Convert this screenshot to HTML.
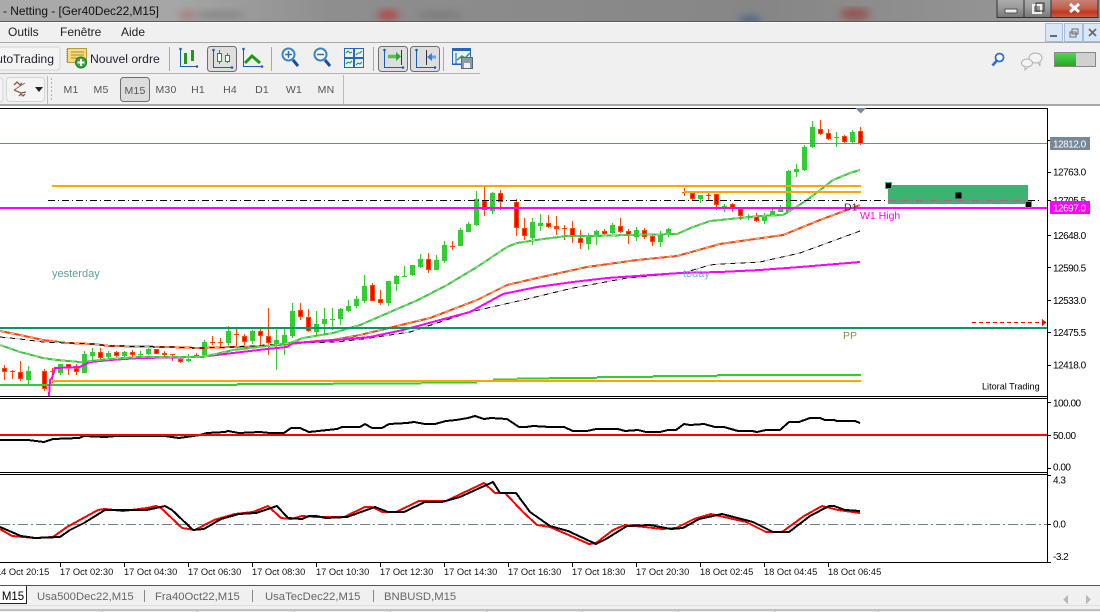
<!DOCTYPE html>
<html><head><meta charset="utf-8"><title>Netting - Ger40Dec22,M15</title>
<style>
html,body{margin:0;padding:0;background:#fff;overflow:hidden}
svg{display:block}
text{font-family:"Liberation Sans",sans-serif}
.a{font-size:10px;letter-spacing:-.5px;fill:#000}
.t{font-size:9.3px;fill:#111}
.m{font-size:12px;fill:#222}
.p{font-size:10.5px;fill:#555;text-anchor:middle;letter-spacing:.2px}
.b{font-size:11.3px;fill:#666}
.c{shape-rendering:crispEdges}
</style></head><body>
<svg width="1100" height="612" viewBox="0 0 1100 612" xmlns="http://www.w3.org/2000/svg">
<defs>
<linearGradient id="tb" x1="0" y1="0" x2="1" y2="0"><stop offset="0" stop-color="#aaa"/><stop offset=".16" stop-color="#a6a6a6"/><stop offset=".3" stop-color="#8e8e8e"/><stop offset=".7" stop-color="#868686"/><stop offset="1" stop-color="#9a9a9a"/></linearGradient>
<linearGradient id="cl" x1="0" y1="0" x2="0" y2="1"><stop offset="0" stop-color="#c98a80"/><stop offset=".55" stop-color="#c0604a"/><stop offset=".7" stop-color="#c8321c"/><stop offset="1" stop-color="#c4604e"/></linearGradient>
<linearGradient id="gb" x1="0" y1="0" x2="0" y2="1"><stop offset="0" stop-color="#b0b0b0"/><stop offset=".5" stop-color="#9a9a9a"/><stop offset="1" stop-color="#777"/></linearGradient>
<linearGradient id="gg" x1="0" y1="0" x2="0" y2="1"><stop offset="0" stop-color="#4fd84f"/><stop offset="1" stop-color="#25a525"/></linearGradient>
<filter id="bl"><feGaussianBlur stdDeviation="4"/></filter>
</defs>

<!-- title bar -->
<rect width="1100" height="22" fill="url(#tb)"/>
<g filter="url(#bl)">
<ellipse cx="187" cy="15" rx="8" ry="5" fill="#a87070" opacity=".7"/>
<ellipse cx="220" cy="15" rx="26" ry="3" fill="#7e7e7e"/>
<ellipse cx="388" cy="15" rx="11" ry="5" fill="#b83a3a" opacity=".85"/>
<ellipse cx="440" cy="15" rx="24" ry="3" fill="#777"/>
<ellipse cx="750" cy="20" rx="11" ry="4" fill="#3c5c8c" opacity=".85"/>
<ellipse cx="855" cy="14" rx="15" ry="6" fill="#9a4848" opacity=".85"/>
</g>
<text x="3" y="15" style="font-size:11.9px;fill:#111">- Netting - [Ger40Dec22,M15]</text>
<rect y="21" width="1100" height="1" fill="#5a5a5a"/>

<!-- window buttons -->
<g class="c">
<rect x="997" y="-2" width="27" height="19.5" fill="url(#gb)" stroke="#333"/>
<rect x="1024" y="-2" width="27" height="19.5" fill="url(#gb)" stroke="#333"/>
<rect x="1051" y="-2" width="47" height="19.5" fill="url(#cl)" stroke="#333"/>
<rect x="1005" y="9" width="12" height="4" fill="#eee" stroke="#555"/>
<rect x="1033" y="5" width="8" height="8" fill="none" stroke="#eee" stroke-width="2"/>
<rect x="1036" y="3" width="8" height="8" fill="none" stroke="#333"/>
</g>
<path d="M1070 4l9 8M1079 4l-9 8" stroke="#fff" stroke-width="3" fill="none"/>

<!-- menu bar -->
<rect y="22" width="1100" height="20" fill="#f0f0f0"/>
<rect y="22" width="1100" height="1" fill="#fbfbfb"/>
<text class="m" x="8" y="36">Outils</text>
<text class="m" x="60" y="36">Fenêtre</text>
<text class="m" x="121" y="36">Aide</text>
<g class="c">
<rect x="1045.500" y="23.500" width="17" height="18" fill="#d8e6f6" stroke="#a6bcd8"/>
<rect x="1064.500" y="23.500" width="18" height="18" fill="#d8e6f6" stroke="#a6bcd8"/>
<rect x="1083.500" y="23.500" width="18" height="18" fill="#d8e6f6" stroke="#a6bcd8"/>
<rect x="1050" y="35" width="7" height="2" fill="#6a6a6a"/>
<rect x="1070" y="32" width="6" height="5" fill="none" stroke="#6a6a6a"/>
<rect x="1072" y="29" width="6" height="5" fill="none" stroke="#6a6a6a"/>
</g>
<path d="M1089 29l7 7M1096 29l-7 7" stroke="#6a6a6a" stroke-width="1.800"/>
<rect y="42" width="1100" height="1" fill="#a8a8a8"/>

<!-- toolbars -->
<rect y="43" width="1100" height="62" fill="#f0f0f0"/>
<rect y="73" width="480" height="1" fill="#b4b4b4"/>
<rect y="104" width="1100" height="2" fill="#a8a8a8"/>
<rect y="106" width="1100" height="1.500" fill="#fff"/>
<rect x="-6" y="47" width="66" height="23" rx="3" fill="#f4f4f4" stroke="#d4d4d4"/>
<text x="54" y="63" text-anchor="end" style="font-size:12.2px;fill:#223">utoTrading</text>
<!-- new order icon -->
<rect x="67.500" y="48.500" width="19" height="14" fill="#f6dc7c" stroke="#b89a36"/>
<path d="M71 52h13M71 55h13M71 58h10" stroke="#a88a30" stroke-width="1"/>
<path d="M67 49v14" stroke="#8a7a40" stroke-dasharray="1 1"/>
<circle cx="81" cy="62.500" r="5.500" fill="#35a93a" stroke="#1e7a22"/>
<path d="M81 59v7M77.500 62.500h7" stroke="#fff" stroke-width="2"/>
<text x="90" y="63" style="font-size:12.2px;fill:#223">Nouvel ordre</text>
<rect x="169" y="47" width="1" height="24" fill="#a8a8a8"/>
<rect x="271" y="47" width="1" height="24" fill="#a8a8a8"/>
<rect x="373" y="47" width="1" height="24" fill="#a8a8a8"/>
<rect x="443" y="47" width="1" height="24" fill="#a8a8a8"/>
<rect x="207.500" y="46.500" width="29" height="25" rx="3" fill="#dedede" stroke="#6e6e6e"/>
<rect x="378.500" y="46.500" width="29" height="25" rx="3" fill="#dedede" stroke="#6e6e6e"/>
<rect x="410.500" y="46.500" width="29" height="25" rx="3" fill="#dedede" stroke="#6e6e6e"/>

<g stroke="#1e5cb4" fill="#1e5cb4" stroke-width="1">
<path d="M180.500 49V66.500H197" fill="none"/><circle cx="180.500" cy="49" r=".8"/><circle cx="197" cy="66.500" r=".8"/>
<path d="M213.500 50V67.500H232" fill="none"/><circle cx="213.500" cy="50" r=".8"/><circle cx="232" cy="67.500" r=".8"/>
<path d="M243.500 49V66.500H262" fill="none"/><circle cx="243.500" cy="49" r=".8"/><circle cx="262" cy="66.500" r=".8"/>
<path d="M384.500 50V67.500H403" fill="none"/><circle cx="384.500" cy="50" r=".8"/><circle cx="403" cy="67.500" r=".8"/>
<path d="M416.500 50V67.500H435" fill="none"/><circle cx="416.500" cy="50" r=".8"/><circle cx="435" cy="67.500" r=".8"/>
<path d="M426.500 50V65M401.500 50V65" fill="none" stroke="#333"/>
</g>
<path d="M185.500 53V64M184 56h3M192.500 50V61" stroke="#1f9a12" stroke-width="3" fill="none"/>
<path d="M219.500 50v14M227.500 53v10" stroke="#1f9a12" fill="none"/>
<rect x="217.500" y="53.500" width="4" height="8" fill="#fff" stroke="#1f9a12"/>
<rect x="225.500" y="55.500" width="4" height="6" fill="#fff" stroke="#1f9a12"/>
<path d="M245 63l7-7 8 7" stroke="#1f9a12" stroke-width="3" fill="none"/>
<circle cx="288.500" cy="54.500" r="6" fill="#f4f9ff" stroke="#3c84cc" stroke-width="2"/>
<path d="M285 54.500h7M288.500 51v7" stroke="#2b6cc0" stroke-width="1.500"/>
<path d="M293 60l5 6" stroke="#1e4f96" stroke-width="3"/>
<circle cx="320.500" cy="54.500" r="6" fill="#f4f9ff" stroke="#3c84cc" stroke-width="2"/>
<path d="M317 54.500h7" stroke="#2b6cc0" stroke-width="1.500"/>
<path d="M325 60l5 6" stroke="#1e4f96" stroke-width="3"/>
<g class="c">
<rect x="344.500" y="48.500" width="19" height="19" fill="#e8f2fb" stroke="#2268c0"/>
<rect x="344" y="57" width="20" height="2" fill="#2268c0"/>
<rect x="353" y="48" width="2" height="20" fill="#2268c0"/>
</g>
<path d="M346 53l2-2 2 2 2-1M356 55l2-2 2 0 2-2M346 64l2-2 2 1 2-2M356 65l2-2 2 1 2-2" stroke="#2e8a2e" fill="none"/>
<path d="M388 56.500h9" stroke="#58c048" stroke-width="3.500"/><path d="M396 52l5 4.500-5 4.500z" fill="#3aa43a"/>
<path d="M436 57h-5" stroke="#6aa0e0" stroke-width="3"/><path d="M432 53l-5 4 5 4z" fill="#3a80d8"/>
<rect x="452.500" y="48.500" width="18" height="16" fill="#e8f2fb" stroke="#2268c0"/>
<rect x="452" y="48" width="19" height="3" fill="#2268c0"/>
<path d="M456 53v11M453 64h8" stroke="#1e5cb4"/>
<path d="M457 60l5-4 3 2 5-5" stroke="#3aa43a" stroke-width="1.500" fill="none"/>
<rect x="461.500" y="57.500" width="11" height="11" fill="#8e9aa6" stroke="#5d6670"/>
<rect x="464" y="63" width="6" height="5" fill="#f0f0f0"/>

<rect x="-6" y="78" width="9" height="24" rx="3" fill="#f4f4f4" stroke="#d4d4d4"/>
<rect x="6.500" y="77.500" width="38" height="24" rx="3" fill="#f4f4f4" stroke="#d4d4d4"/>
<path d="M14 85l3-3 3 3 2-2M14 90l7 3 5-1M19 96l2-2 2 2 2-2" stroke="#8a5a48" stroke-width="1.300" fill="none"/>
<path d="M14 90l11-7" stroke="#8a5a48" stroke-width=".8"/>
<path d="M35 87h8l-4 5z" fill="#222"/>
<path d="M51.500 78V102" stroke="#b0b0b0" stroke-dasharray="2 2"/>
<rect x="47" y="76" width="1" height="28" fill="#bbb"/>
<rect x="343" y="75" width="1" height="29" fill="#bbb"/>
<rect x="120.500" y="77.500" width="29" height="24" rx="3" fill="#dcdcdc" stroke="#6e6e6e"/>
<text class="p" x="71" y="93">M1</text>
<text class="p" x="101" y="93">M5</text>
<text class="p" x="135" y="94">M15</text>
<text class="p" x="166" y="93">M30</text>
<text class="p" x="198" y="93">H1</text>
<text class="p" x="230" y="93">H4</text>
<text class="p" x="262" y="93">D1</text>
<text class="p" x="294" y="93">W1</text>
<text class="p" x="326" y="93">MN</text>

<!-- right toolbar icons -->
<circle cx="999.500" cy="57.500" r="4" fill="#fff" stroke="#2a6ed0" stroke-width="1.800"/>
<path d="M996.500 61l-4 4.500" stroke="#2a6ed0" stroke-width="2.600"/>
<ellipse cx="1035.500" cy="58" rx="6.500" ry="5" fill="#f4f4f4" stroke="#b0b0b0"/>
<path d="M1038 62l2 4v-5" fill="#f4f4f4" stroke="#b0b0b0"/>
<ellipse cx="1027" cy="63" rx="5.500" ry="4" fill="#f4f4f4" stroke="#b0b0b0"/>
<path d="M1025 67l0 3 3-3" fill="#f4f4f4" stroke="#b0b0b0"/>
<g class="c">
<rect x="1054.500" y="52.500" width="41" height="14" fill="#d0d0d0" stroke="#888"/>
<rect x="1055" y="53" width="21" height="13" fill="url(#gg)"/>
</g>

<!-- chart frame -->
<rect y="107.500" width="1100" height="478" fill="#fff"/>
<g class="c" fill="none">
<path d="M0 108.500H1047.500V562.500H0" stroke="#000"/>
<path d="M0 396.500H1047.500M0 398.500H1047.500M0 472.500H1047.500M0 474.500H1047.500" stroke="#000"/>

<!-- candles -->
<path stroke="#32cd32" d="M28.500 366V384M60.500 364V375M84.500 351V373M92.500 348V360M108.500 351V359M124.500 351V357M140.500 351V357M148.500 348V355M188.500 354V362M204.500 340V356M228.500 326V346M252.500 330V344M276.500 329V370M284.500 328V355M292.500 303V338M316.500 311V335M324.500 308V335M332.500 308V330M340.500 308V325M348.500 300V312M356.500 296V308M364.500 275V303M388.500 281V306M396.500 275V291M404.500 266V277M412.500 265V276M420.500 254V268M436.500 255V270M444.500 241V263M460.500 228V246M468.500 222V232M476.500 191V226M492.500 192V214M532.500 218V245M540.500 214V231M588.500 233V250M596.500 230V245M612.500 223V234M636.500 227V241M660.500 231V247M668.500 228V237M700.500 195V203M724.500 204V212M748.500 214V220M764.500 213V224M772.500 209V216M780.500 205V212M788.500 170V212M796.500 164V177M804.500 145V171M812.500 121V148M836.500 132V147M852.500 130V144"/>
<path stroke="#32cd32" stroke-width="5" d="M28.500 371V380M60.500 364V373M84.500 354V373M92.500 352V356M108.500 353V357M124.500 352V356M140.500 354V355M148.500 349V354M188.500 359V361M204.500 342V355M228.500 331V343M252.500 331V341M276.500 340V345M284.500 335V343M292.500 311V336M316.500 324V332M324.500 319V324M332.500 319V320M340.500 309V319M348.500 306V311M356.500 299V306M364.500 286V301M388.500 281V303M396.500 276V284M404.500 276V277M412.500 265V275M420.500 259V267M436.500 260V270M444.500 245V261M460.500 230V246M468.500 224V232M476.500 199V225M492.500 193V211M532.500 222V238M540.500 223V226M588.500 237V244M596.500 231V236M612.500 225V233M636.500 230V237M660.500 235V242M668.500 229V234M700.500 195V199M724.500 206V207M748.500 216V218M764.500 216V221M772.500 211V216M780.500 209V212M788.500 171V212M796.500 169V172M804.500 147V170M812.500 127V147M836.500 137V138M852.500 132V142"/>
<path stroke="#ff4500" d="M4.500 365V380M12.500 370V379M20.500 361V381M44.500 369V391M52.500 368V383M68.500 364V375M76.500 364V375M100.500 348V360M116.500 351V357M132.500 350V357M156.500 349V354M164.500 351V357M172.500 354V361M180.500 358V363M196.500 353V357M212.500 336V345M220.500 338V347M236.500 328V347M244.500 334V345M260.500 329V345M268.500 308V355M300.500 303V320M308.500 309V332M372.500 283V301M380.500 290V305M428.500 253V273M452.500 241V250M484.500 187V216M500.500 190V210M516.500 199V236M524.500 218V240M548.500 215V228M556.500 216V235M564.500 225V240M572.500 221V243M580.500 230V249M604.500 229V235M620.500 218V233M628.500 229V244M644.500 228V239M652.500 235V246M684.500 188V196M692.500 192V201M708.500 192V200M716.500 194V210M732.500 203V212M740.500 208V220M756.500 213V222M820.500 120V135M828.500 129V140M844.500 135V144M860.500 127V145"/>
<path stroke="#ff4500" stroke-width="5" d="M4.500 368V372M12.500 371V372M20.500 372V379M44.500 371V389M52.500 371V372M68.500 364V368M76.500 368V372M100.500 352V358M116.500 352V356M132.500 352V355M156.500 349V354M164.500 353V355M172.500 354V355M180.500 359V362M196.500 355V356M212.500 342V343M220.500 342V343M236.500 334V335M244.500 336V342M260.500 331V336M268.500 336V343M300.500 310V317M308.500 317V331M372.500 285V301M380.500 299V303M428.500 259V270M452.500 246V247M484.500 201V210M500.500 193V202M516.500 202V228M524.500 228V236M548.500 223V227M556.500 226V229M564.500 228V229M572.500 228V236M580.500 238V243M604.500 231V234M620.500 226V232M628.500 231V236M644.500 230V237M652.500 236V242M684.500 192V193M692.500 193V199M708.500 195V196M716.500 194V205M732.500 204V209M740.500 209V216M756.500 216V221M820.500 129V134M828.500 133V139M844.500 136V142M860.500 131V144"/>
<path stroke="#ff0000" stroke-width="3" d="M4.500 369V371M20.500 373V378M44.500 372V388M68.500 365V367M76.500 369V371M100.500 353V357M116.500 353V355M132.500 353V354M156.500 350V353M180.500 360V361M244.500 337V341M260.500 332V335M268.500 337V342M300.500 311V316M308.500 318V330M372.500 286V300M380.500 300V302M428.500 260V269M484.500 202V209M500.500 194V201M516.500 203V227M524.500 229V235M548.500 224V226M572.500 229V235M580.500 239V242M604.500 232V233M620.500 227V231M628.500 232V235M644.500 231V236M652.500 237V241M692.500 194V198M716.500 195V204M732.500 205V208M740.500 210V215M756.500 217V220M820.500 130V133M828.500 134V138M844.500 137V141M860.500 132V143"/>

<!-- stepped bottom levels -->
<path stroke="#32cd32" stroke-width="2" d="M0 385H237M237 384H333M333 383.500H421M421 382.500H477M493 379.500H517M517 378.500H549M549 378H597M597 377H653M653 376H717M717 375H861"/>
<path stroke="#ffa500" stroke-width="2" d="M52 381H861"/>

<!-- moving averages -->
<polyline stroke="#ff4500" stroke-width="2" points="0,331 20,335 43,340 67,343 93,344 110,346 167,347 200,348 233,347 267,346 290,344 317,341 333,340 360,335 430,318 477,300 507,285 537,278 587,267 637,260 677,256 720,244 783,235 820,220 860,205"/>
<polyline stroke="#c0c0c0" stroke-width="1" stroke-dasharray="5 5" points="0,331 20,335 43,340 67,343 93,344 110,346 167,347 200,348 233,347 267,346 290,344 317,341 333,340 360,335 430,318 477,300 507,285 537,278 587,267 637,260 677,256 720,244 783,235 820,220 860,205"/>
<polyline stroke="#bdbdbd" stroke-width="1" points="0,337 20,339 43,342 67,343 93,344 110,346 167,347 200,348 233,347 267,345 293,343 337,342 370,338 410,332 470,312 527,299 573,288 627,278 683,273 710,265 720,264 760,262 800,253 860,231"/>
<polyline stroke="#000" stroke-width="1" stroke-dasharray="5 5" points="0,337 20,339 43,342 67,343 93,344 110,346 167,347 200,348 233,347 267,345 293,343 337,342 370,338 410,332 470,312 527,299 573,288 627,278 683,273 710,265 720,264 760,262 800,253 860,231"/>
<polyline stroke="#ff00ff" stroke-width="2" points="49,396 50,380 52,378 55,368 80,367 90,362 110,360 140,358 200,357 233,353 267,349 287,347 293,343 337,340 370,337 403,330 440,320 470,312 492,300 503,294 537,287 573,282 607,278 680,273 720,272 760,270 800,267 860,262"/>
<polyline stroke="#32cd32" stroke-width="2" points="0,345 20,352 43,358 57,360 80,362 90,361 110,359 140,357 203,357 233,350 267,346 290,343 303,338 333,333 360,325 418,300 447,285 477,267 507,247 517,243 543,239 567,236 593,236 627,235 677,234 693,227 710,221 720,220 740,218 760,216 783,215 793,209 807,200 820,190 833,180 850,173 860,170"/>
<polyline stroke="#bdbdbd" stroke-width="1" stroke-dasharray="4 5" points="0,345 20,352 43,358 57,360 80,362 90,361 110,359 140,357 203,357 233,350 267,346 290,343 303,338 333,333 360,325 418,300 447,285 477,267 507,247 517,243 543,239 567,236 593,236 627,235 677,234 693,227 710,221 720,220 740,218 760,216 783,215 793,209 807,200 820,190 833,180 850,173 860,170"/>

<!-- horizontal levels -->
<path stroke="#778899" d="M0 143.500H1047"/>
<path stroke="#ffa500" stroke-width="2" d="M52 186H861M684 192H861"/>
<path stroke="#000" stroke-dasharray="7 3 1 3" d="M48 200.500H1040"/>
<path stroke="#ff00ff" stroke-width="2" d="M0 208H1047"/>
<path stroke="#009966" stroke-width="2" d="M0 328H1047"/>
</g>

<!-- objects -->
<g class="c">
<rect x="888" y="185" width="140" height="19" fill="#3cb371"/>
<path d="M888 200.500H1028" stroke="#b06080" stroke-dasharray="7 3 1 3" fill="none"/>
<rect x="885.500" y="182.500" width="6" height="6" fill="#000" stroke="#3cb371"/>
<rect x="955.500" y="192.500" width="6" height="6" fill="#000"/>
<rect x="1025.500" y="201.500" width="6" height="6" fill="#000" stroke="#3cb371"/>
<path d="M855 108h11l-5.500 5.500z" fill="#778899"/>
<path d="M972 322.500H1043" stroke="#f00" stroke-dasharray="4 3" fill="none"/>
<path d="M1042 319l4.500 3.500-4.500 3.500z" fill="#f00"/>
</g>
<text x="52" y="277" style="font-size:11px;fill:#5f9ea0">yesterday</text>
<text x="683" y="277" style="font-size:11px;fill:#7aa8d8">today</text>
<text x="844" y="210.500" style="font-size:10.500px;fill:#333">D1</text>
<text x="860" y="219" style="font-size:10.500px;fill:#ff00ff">W1 High</text>
<text x="843" y="339" style="font-size:10.500px;fill:#7f9240">PP</text>
<text x="982" y="389.500" style="font-size:9.100px;fill:#000">Litoral Trading</text>

<!-- RSI -->
<g class="c" fill="none">
<polyline stroke="#000" stroke-width="2" points="0,440 28,440 44,442 53,439 79,438 84,436 105,437 116,436 165,436 179,438 200,435 207,433 225,432 228,431 239,433 260,432 270,433 284,433 291,428 300,428 309,432 337,429 342,427 360,427 365,424 372,428 382,428 389,424 407,423 414,422 425,424 435,424 446,421 456,420 468,418 475,416 484,419 491,418 507,419 519,427 526,427 533,426 550,427 564,427 573,431 587,431 596,429 618,429 625,431 638,430 646,432 660,432 668,430 676,430 684,424 690,425 704,424 715,427 724,427 738,431 752,431 757,432 766,430 780,430 789,422 799,422 810,418 820,418 825,420 834,420 837,421 855,421 860,423"/>
<path stroke="#f00" stroke-width="2" d="M0 435H1047"/>
<!-- stochastic -->
<path stroke="#708090" stroke-dasharray="10 3 2 3" d="M0 524.500H1047"/>
<polyline stroke="#f00" stroke-width="2" points="0,529 12,536 35,538 53,537 67,527 98,510 105,509 123,511 147,508 156,506 161,508 182,528 195,530 214,520 235,514 253,512 268,506 281,518 291,519 302,516 316,517 344,517 365,507 372,507 382,512 396,512 419,501 446,501 484,483 495,493 505,493 523,512 537,525 550,527 564,533 589,544 596,543 613,530 625,525 645,527 662,529 676,528 694,519 711,514 746,522 766,532 782,532 804,516 822,506 838,510 860,513"/>
<polyline stroke="#000" stroke-width="2" points="0,527 7,530 21,536 35,538 60,537 70,530 84,523 105,510 147,510 165,506 172,510 193,530 204,529 221,519 239,514 256,513 277,506 288,518 302,519 309,516 316,516 326,518 347,517 361,512 375,507 388,512 404,512 425,502 442,502 460,497 493,482 500,493 516,493 530,512 550,526 568,531 596,544 606,539 627,526 650,525 671,529 683,528 699,519 722,514 753,522 773,532 789,532 810,516 829,506 834,506 845,510 860,511"/>
<!-- ticks -->
<path stroke="#000" d="M1047 140.500h4M1047 172.500h4M1047 200.500h4M1047 235.500h4M1047 267.500h4M1047 300.500h4M1047 332.500h4M1047 365.500h4M1047 402.500h4M1047 435.500h4M1047 468.500h4M1047 475.500h4M1047 524.500h4M1047 562.500h4M60.500 562V567M124.500 562V567M188.500 562V567M252.500 562V567M316.500 562V567M380.500 562V567M444.500 562V567M508.500 562V567M572.500 562V567M636.500 562V567M700.500 562V567M764.500 562V567M828.500 562V567"/>
</g>

<!-- axis labels -->
<text class="a" x="1053" y="144">12820.5</text>
<text class="a" x="1053" y="175.500">12763.0</text>
<text class="a" x="1053" y="204">12705.5</text>
<text class="a" x="1053" y="239">12648.0</text>
<text class="a" x="1053" y="271.500">12590.5</text>
<text class="a" x="1053" y="304">12533.0</text>
<text class="a" x="1053" y="336">12475.5</text>
<text class="a" x="1053" y="368.500">12418.0</text>
<rect x="1050" y="137" width="40" height="13" fill="#778899" class="c"/>
<text class="a" x="1053" y="147.500" style="fill:#fff">12812.0</text>
<rect x="1050" y="201" width="40" height="13" fill="#ff00ff" class="c"/>
<text class="a" x="1053" y="211.500" style="fill:#fff">12697.0</text>
<text class="a" x="1053" y="406.500">100.00</text>
<text class="a" x="1053" y="439">50.00</text>
<text class="a" x="1053" y="470.500">0.00</text>
<text class="a" x="1053" y="483.500">4.3</text>
<text class="a" x="1053" y="527.500">0.0</text>
<text class="a" x="1053" y="560">-3.2</text>

<!-- time labels -->
<text class="t" x="-4" y="575">14 Oct 20:15</text>
<text class="t" x="60" y="575">17 Oct 02:30</text>
<text class="t" x="124" y="575">17 Oct 04:30</text>
<text class="t" x="188" y="575">17 Oct 06:30</text>
<text class="t" x="252" y="575">17 Oct 08:30</text>
<text class="t" x="316" y="575">17 Oct 10:30</text>
<text class="t" x="380" y="575">17 Oct 12:30</text>
<text class="t" x="444" y="575">17 Oct 14:30</text>
<text class="t" x="508" y="575">17 Oct 16:30</text>
<text class="t" x="572" y="575">17 Oct 18:30</text>
<text class="t" x="636" y="575">17 Oct 20:30</text>
<text class="t" x="700" y="575">18 Oct 02:45</text>
<text class="t" x="764" y="575">18 Oct 04:45</text>
<text class="t" x="828" y="575">18 Oct 06:45</text>

<!-- tab bar -->
<rect y="585" width="1100" height="27" fill="#f0f0f0"/>
<rect y="585" width="1100" height="1" fill="#555"/>
<rect y="586" width="26" height="17" fill="#fff"/>
<path d="M0 603.500H26.500V586" stroke="#222" fill="none" class="c"/>
<text x="13" y="600" text-anchor="middle" style="font-size:11.500px;fill:#000">M15</text>
<text class="b" x="37" y="600">Usa500Dec22,M15</text>
<text class="b" x="155" y="600">Fra40Oct22,M15</text>
<text class="b" x="265" y="600">UsaTecDec22,M15</text>
<text class="b" x="384" y="600">BNBUSD,M15</text>
<g class="c">
<rect x="144" y="590" width="1" height="12" fill="#888"/>
<rect x="252" y="590" width="1" height="12" fill="#888"/>
<rect x="373" y="590" width="1" height="12" fill="#888"/>
<rect y="605" width="1100" height="1" fill="#dedede"/>
<rect y="609" width="1100" height="2" fill="#c0c0c0"/>
<path d="M102 609v3M197 609v3M294 609v3M390 609v3M487 609v3M582 609v3M678 609v3M775 609v3M878 609v3" stroke="#bbb" fill="none"/>
<path d="M1068 595v9l-5-4.500zM1086 595v9l5-4.500z" fill="#b8b8b8"/>
</g>
</svg>
</body></html>
